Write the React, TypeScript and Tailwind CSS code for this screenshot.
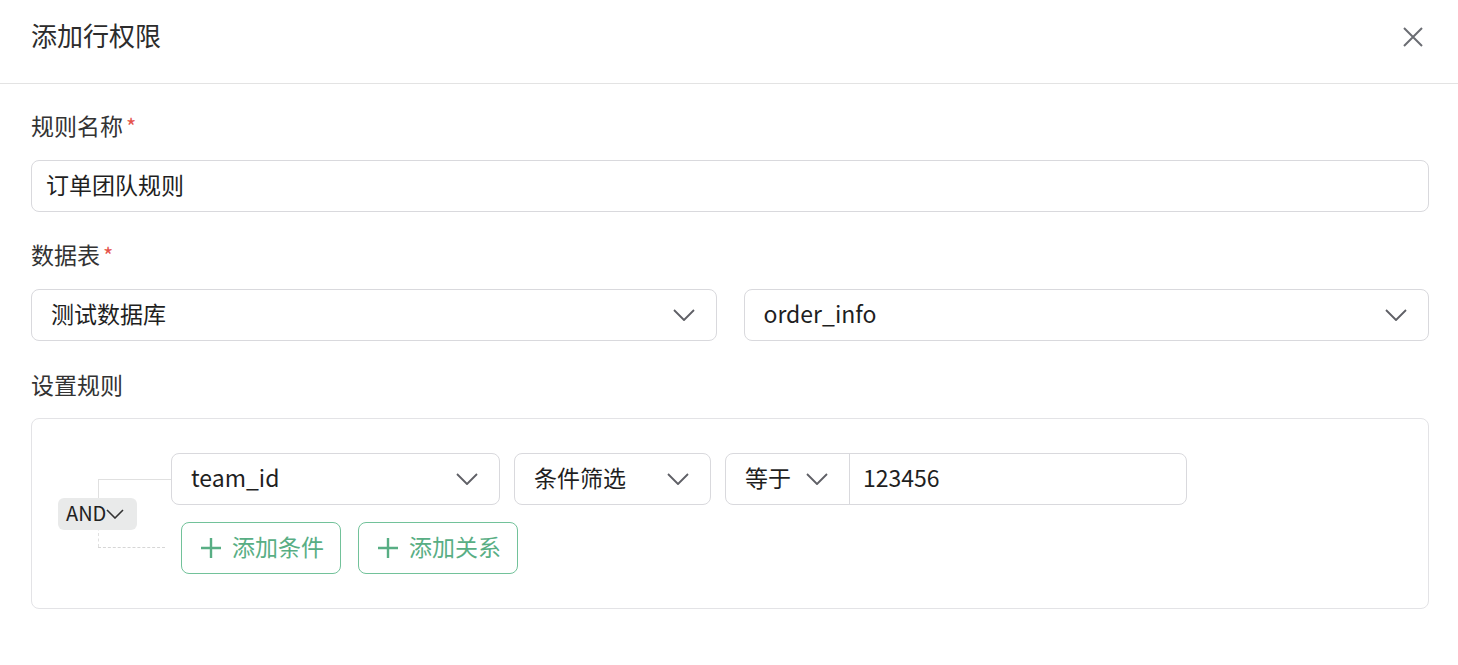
const font = { fontFamily: '"Noto Sans CJK SC", "Noto Sans", sans-serif' }

function Chevron({ className }: { className?: string }) {
  return (
    <svg viewBox="0 0 22 12" className={className ?? 'w-[22px] h-[12px] text-[#5f6066]'} fill="none">
      <polyline points="1,1 11,11 21,1" stroke="currentColor" strokeWidth="1.8" strokeLinejoin="round" />
    </svg>
  )
}

function Label({ text, required }: { text: string; required?: boolean }) {
  return (
    <div className="flex items-center h-[30px] text-[23px] text-[#333]">
      <span className="-mt-[5px]">{text}</span>
      {required && <span className="ml-[3px] text-[22px] text-[#e5534b] leading-none -mt-[6px]">*</span>}
    </div>
  )
}

function Select({ value, className }: { value: string; className?: string }) {
  return (
    <div
      className={`flex items-center justify-between h-[52px] pl-[19px] pr-[21px] border border-[#d9d9dd] rounded-[8px] bg-white ${className ?? ''}`}
    >
      <span className="text-[23px] text-[#1f1f1f] -mt-[3px]">{value}</span>
      <Chevron />
    </div>
  )
}

function AddButton({ text }: { text: string }) {
  return (
    <button className="flex items-center gap-[11px] h-[52px] w-[160px] pl-[19px] border border-[#72c29a] rounded-[8px] text-[23px] text-[#58ae84] bg-white">
      <svg viewBox="0 0 20 20" className="w-[20px] h-[20px]" fill="none">
        <path d="M10 0v20M0 10h20" stroke="currentColor" strokeWidth="2.4" />
      </svg>
      <span className="-mt-[3px]">{text}</span>
    </button>
  )
}

export default function App() {
  return (
    <div className="w-[1458px] h-[665px] bg-white" style={font}>
      <div className="flex items-center justify-between h-[84px] pl-[31px] pr-[35px] border-b border-[#e3e3e3]">
        <h2 className="text-[26px] text-[#2c2c2c] -mt-[14px]">添加行权限</h2>
        <svg viewBox="0 0 20 20" className="w-[20px] h-[20px] text-[#6b6d73] -mt-[10px]" fill="none">
          <path d="M1 1l18 18M19 1L1 19" stroke="currentColor" strokeWidth="2" />
        </svg>
      </div>

      <div className="pl-[31px] pr-[29px] pt-[29px]">
        <Label text="规则名称" required />
        <div className="mt-[17px] flex items-center h-[52px] pl-[14px] border border-[#d9d9dd] rounded-[8px] text-[23px] text-[#1f1f1f]">
          <span className="-mt-[3px]">订单团队规则</span>
        </div>

        <div className="mt-[30px]">
          <Label text="数据表" required />
        </div>
        <div className="mt-[17px] grid grid-cols-2 gap-[27px]">
          <Select value="测试数据库" />
          <Select value="order_info" />
        </div>

        <div className="mt-[31px]">
          <Label text="设置规则" />
        </div>
        <div className="mt-[16px] h-[191px] border border-[#e3e3e6] rounded-[8px] pl-[26px] pt-[34px]">
          <div className="flex">
            <div className="relative w-[113px] h-[121px] flex items-center">
              <div className="absolute left-[40px] top-[26px] right-0 h-[43px] border-l border-t border-[#e0e0e0]" />
              <div className="absolute left-[40px] top-[69px] w-px h-[25px] border-l border-dashed border-[#e0e0e0]" />
              <div className="absolute left-[40px] top-[94px] w-[67px] border-t border-dashed border-[#d6d6d6]" />
              <div className="relative flex items-center h-[32px] w-[79px] pl-[8px] rounded-[6px] bg-[#e9eaea] text-[20px] text-[#222]">
                <span className="-mt-[2px]">AND</span>
                <svg viewBox="0 0 18 10" className="w-[18px] h-[10px] text-[#333]" fill="none">
                  <polyline points="1,1 9,9 17,1" stroke="currentColor" strokeWidth="1.6" />
                </svg>
              </div>
            </div>
            <div className="flex flex-col gap-[17px]">
              <div className="flex gap-[14px]">
                <Select value="team_id" className="w-[329px]" />
                <Select value="条件筛选" className="w-[197px]" />
                <div className="flex h-[52px] w-[462px] border border-[#d9d9dd] rounded-[8px]">
                  <div className="flex items-center justify-between w-[124px] pl-[19px] pr-[21px] border-r border-[#d9d9dd]">
                    <span className="text-[23px] text-[#1f1f1f] -mt-[3px]">等于</span>
                    <Chevron />
                  </div>
                  <div className="flex items-center pl-[13px] text-[23px] text-[#1f1f1f]">
                    <span className="-mt-[3px]">123456</span>
                  </div>
                </div>
              </div>
              <div className="flex gap-[17px] pl-[10px]">
                <AddButton text="添加条件" />
                <AddButton text="添加关系" />
              </div>
            </div>
          </div>
        </div>
      </div>
    </div>
  )
}
